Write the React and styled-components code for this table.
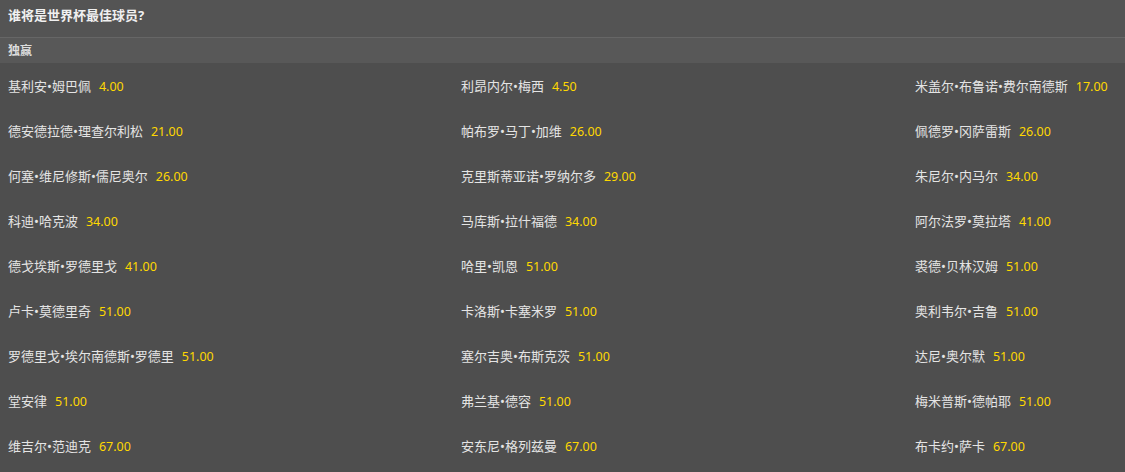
import React from 'react';
import styled, { createGlobalStyle } from 'styled-components';

const Global = createGlobalStyle`
  html, body {
    margin: 0;
    padding: 0;
    background: #4e4e4e;
  }
  body {
    font-family: "Noto Sans", "Noto Sans CJK SC", sans-serif;
  }
`;

const Panel = styled.div`
  width: 1125px;
  height: 472px;
  background: #4e4e4e;
  overflow: hidden;
`;

const Title = styled.div`
  height: 37px;
  line-height: 30px;
  padding-left: 8px;
  background: #545454;
  border-bottom: 1px solid #666;
  color: #f0f0f0;
  font-size: 13px;
  font-weight: bold;
`;

const SubHead = styled.div`
  height: 25px;
  line-height: 26px;
  padding-left: 8px;
  background: #585858;
  color: #dcdcdc;
  font-size: 12px;
  font-weight: bold;
`;

const Grid = styled.div`
  display: grid;
  grid-template-columns: 453px 454px 1fr;
  padding-left: 8px;
`;

const Cell = styled.div`
  height: 45px;
  line-height: 47px;
  font-size: 13px;
  color: #e4e4e4;
  white-space: nowrap;
`;

const Odds = styled.span`
  color: #ffd800;
  font-size: 12.5px;
  margin-left: 8px;
`;

const players = [
  ['基利安•姆巴佩', '4.00'],
  ['利昂内尔•梅西', '4.50'],
  ['米盖尔•布鲁诺•费尔南德斯', '17.00'],
  ['德安德拉德•理查尔利松', '21.00'],
  ['帕布罗•马丁•加维', '26.00'],
  ['佩德罗•冈萨雷斯', '26.00'],
  ['何塞•维尼修斯•儒尼奥尔', '26.00'],
  ['克里斯蒂亚诺•罗纳尔多', '29.00'],
  ['朱尼尔•内马尔', '34.00'],
  ['科迪•哈克波', '34.00'],
  ['马库斯•拉什福德', '34.00'],
  ['阿尔法罗•莫拉塔', '41.00'],
  ['德戈埃斯•罗德里戈', '41.00'],
  ['哈里•凯恩', '51.00'],
  ['裘德•贝林汉姆', '51.00'],
  ['卢卡•莫德里奇', '51.00'],
  ['卡洛斯•卡塞米罗', '51.00'],
  ['奥利韦尔•吉鲁', '51.00'],
  ['罗德里戈•埃尔南德斯•罗德里', '51.00'],
  ['塞尔吉奥•布斯克茨', '51.00'],
  ['达尼•奥尔默', '51.00'],
  ['堂安律', '51.00'],
  ['弗兰基•德容', '51.00'],
  ['梅米普斯•德帕耶', '51.00'],
  ['维吉尔•范迪克', '67.00'],
  ['安东尼•格列兹曼', '67.00'],
  ['布卡约•萨卡', '67.00'],
];

export default function App() {
  return (
    <Panel>
      <Global />
      <Title>谁将是世界杯最佳球员?</Title>
      <SubHead>独赢</SubHead>
      <Grid>
        {players.map(([name, odds]) => (
          <Cell key={name}>
            {name}
            <Odds>{odds}</Odds>
          </Cell>
        ))}
      </Grid>
    </Panel>
  );
}
